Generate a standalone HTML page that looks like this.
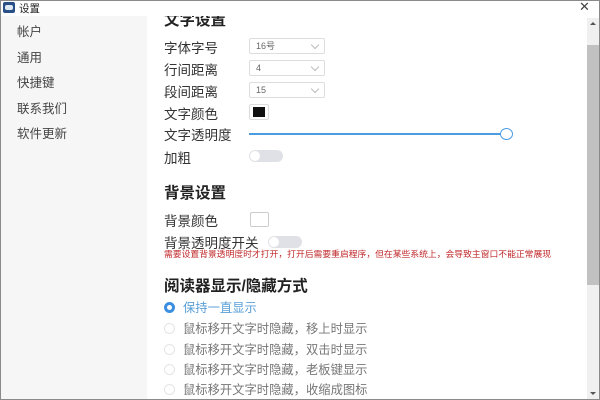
<!DOCTYPE html>
<html><head><meta charset="utf-8"><style>
*{margin:0;padding:0;box-sizing:border-box}
body{width:600px;height:400px;overflow:hidden;background:#fff;position:relative;font-family:"Liberation Sans","Noto Sans CJK SC",sans-serif;color:#333}
.win{position:absolute;left:0;top:0;width:600px;height:400px;border:1px solid #8a8a8a;z-index:10}
.a{position:absolute;white-space:nowrap}
.side{position:absolute;left:1px;top:16px;width:146px;height:383px;background:#f6f6f6}
.side div{position:absolute;left:16px;font-size:12.5px;color:#444}
.lbl{font-size:13.5px;color:#333}
.h{font-size:15.5px;font-weight:bold;color:#222}
.sel{position:absolute;left:249px;width:76px;height:16px;border:1px solid #ddd;border-radius:2px;font-size:9px;color:#666;padding-left:6px;line-height:14px}
.sel:after{content:"";position:absolute;right:6px;top:3px;width:5px;height:5px;border-right:1px solid #bbb;border-bottom:1px solid #bbb;transform:rotate(45deg)}
.tog{position:absolute;height:12px;width:34px;border-radius:6px;background:#dfe1e6}
.tog:before{content:"";position:absolute;left:1px;top:1px;width:10px;height:10px;border-radius:50%;background:#fff}
.r{position:absolute;left:164px;width:11px;height:11px;border-radius:50%;border:1px solid #e4e4e4}
.rt{position:absolute;left:183px;font-size:12.3px;color:#777}
.tb{position:absolute;left:0;top:0;width:600px;height:16px;background:#fff;z-index:5}
</style></head><body>
<div class="win"></div>
<div class="tb">
<div class="a" style="left:3px;top:2px;width:12px;height:11px;background:#2a4f87;border-radius:2px"></div>
<div class="a" style="left:5px;top:5px;width:8px;height:5px;background:#dfe8f5;border-radius:2px"></div>
<div class="a" style="left:19px;top:1px;font-size:10.5px;color:#222">设置</div>
<div class="a" style="left:579px;top:-1px;font-size:13px;color:#444">✕</div>
</div>
<div class="side"><div style="top:5px">帐户</div><div style="top:31px">通用</div><div style="top:56px">快捷键</div><div style="top:82px">联系我们</div><div style="top:107px">软件更新</div></div>
<div class="a" style="left:587px;top:18px;width:12px;height:381px;background:#f0f0f0"></div>
<div class="a" style="left:587px;top:45px;width:12px;height:240px;background:#c1c1c1"></div>
<div class="a" style="left:590px;top:22px;width:0;height:0;border-left:3px solid transparent;border-right:3px solid transparent;border-bottom:3px solid #555"></div>
<div class="a" style="left:590px;top:392px;width:0;height:0;border-left:3px solid transparent;border-right:3px solid transparent;border-top:3px solid #555"></div>
<div class="a h" style="left:164px;top:8px">文字设置</div>
<div class="a lbl" style="left:164px;top:37px">字体字号</div>
<div class="sel" style="top:38px">16号</div>
<div class="a lbl" style="left:164px;top:59px">行间距离</div>
<div class="sel" style="top:60px">4</div>
<div class="a lbl" style="left:164px;top:81px">段间距离</div>
<div class="sel" style="top:82px">15</div>
<div class="a lbl" style="left:164px;top:103px">文字颜色</div>
<div class="a" style="left:249px;top:104px;width:20px;height:16px;border:1px solid #ddd;border-radius:2px"></div>
<div class="a" style="left:253px;top:107px;width:12px;height:10px;background:#111"></div>
<div class="a lbl" style="left:164px;top:124px">文字透明度</div>
<div class="a" style="left:249px;top:133px;width:252px;height:2px;background:#4a9be0"></div>
<div class="a" style="left:500px;top:128px;width:13px;height:12px;border:1.5px solid #4a9be0;border-radius:50%;background:#fff"></div>
<div class="a lbl" style="left:164px;top:147px">加粗</div>
<div class="tog" style="left:249px;top:150px"></div>
<div class="a h" style="left:164px;top:181px">背景设置</div>
<div class="a lbl" style="left:164px;top:210px">背景颜色</div>
<div class="a" style="left:250px;top:212px;width:19px;height:15px;border:1px solid #ccc;border-radius:2px"></div>
<div class="a lbl" style="left:164px;top:232px">背景透明度开关</div>
<div class="tog" style="left:268px;top:236px"></div>
<div class="a" style="left:164px;top:247px;font-size:8.8px;color:#c0292b">需要设置背景透明度时才打开，打开后需要重启程序，但在某些系统上，会导致主窗口不能正常展现</div>
<div class="a h" style="left:164px;top:274px">阅读器显示/隐藏方式</div>
<div class="r" style="top:302px;border:3px solid #3b8ee0"></div>
<div class="rt" style="top:298px;color:#5a9fd8">保持一直显示</div>
<div class="r" style="top:323px"></div><div class="rt" style="top:319px">鼠标移开文字时隐藏，移上时显示</div>
<div class="r" style="top:344px"></div><div class="rt" style="top:340px">鼠标移开文字时隐藏，双击时显示</div>
<div class="r" style="top:364px"></div><div class="rt" style="top:360px">鼠标移开文字时隐藏，老板键显示</div>
<div class="r" style="top:384px"></div><div class="rt" style="top:380px">鼠标移开文字时隐藏，收缩成图标</div>
</body></html>
